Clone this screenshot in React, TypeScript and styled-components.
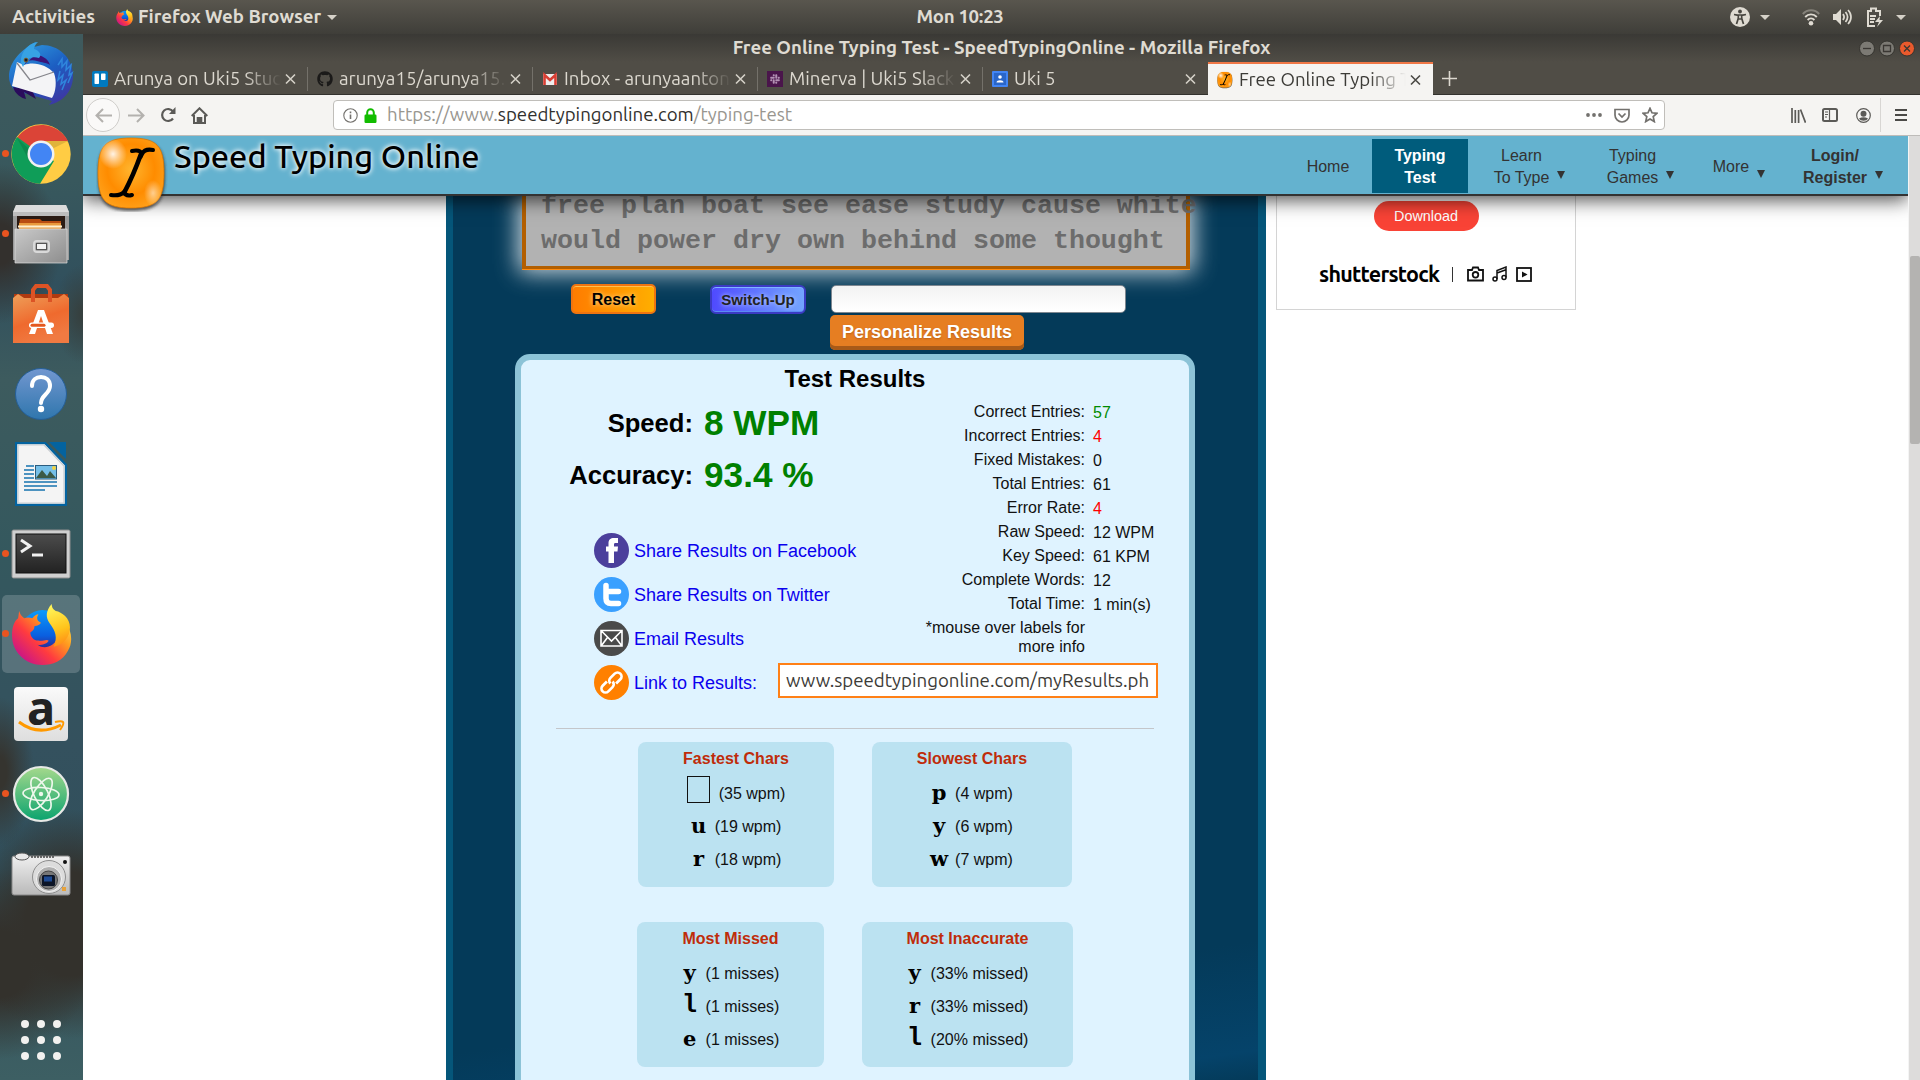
import React from 'react';
import styled, { createGlobalStyle } from 'styled-components';
import { FaGithub, FaSlack } from 'react-icons/fa';

const ui = '"Ubuntu", "Noto Sans", "Open Sans", sans-serif';
const arial = '"Liberation Sans", Arial, sans-serif';

const Global = createGlobalStyle`
  * { box-sizing: border-box; }
  body { margin: 0; background: #fff; overflow: hidden; font-family: ${arial}; }
  svg { display: block; flex: none; }
`;

const Desktop = styled.div`
  width: 1920px; height: 1080px; display: flex; flex-direction: column; overflow: hidden;
`;
const TopBar = styled.div`
  height: 34px; flex: none; display: grid; grid-template-columns: 1fr auto 1fr; align-items: center;
  background: linear-gradient(#59564e, #3f3e39); color: #dfdbd2;
  font: bold 18.67px/34px ${ui};
`;
const TopLeft = styled.div`display: flex; align-items: center; padding-left: 12px;`;
const TopRight = styled.div`display: flex; align-items: center; justify-content: flex-end; padding-right: 14px;`;
const Label = styled.span<{ $ls?: number; $ml?: number }>`
  letter-spacing: ${p => p.$ls ?? 0}px; margin-left: ${p => p.$ml ?? 0}px; white-space: nowrap;
`;
const Caret = styled.i<{ $ml?: number }>`
  width: 0; height: 0; border: 5px solid transparent; border-top-color: #d5d1c8; border-bottom: 0; margin-left: ${p => p.$ml ?? 7}px;
`;
const Below = styled.div`flex: 1; display: flex; min-height: 0;`;

const Dock = styled.div`
  width: 83px; flex: none; display: flex; flex-direction: column; justify-content: space-between;
  background:
    radial-gradient(ellipse 62px 80px at 0 210px, #33302d 25%, transparent 100%),
    radial-gradient(ellipse 30px 50px at 83px 280px, #36403f 10%, transparent 100%),
    radial-gradient(ellipse 34px 75px at 0 738px, #35342f 20%, transparent 100%),
    radial-gradient(ellipse 100px 115px at 70px 890px, #33312c 45%, transparent 100%),
    radial-gradient(ellipse 90px 95px at 0 930px, #33312c 35%, transparent 100%),
    linear-gradient(#3f5a5d 0%, #38585d 14%, #31505d 24%, #3d5b5e 33%, #34585e 50%, #34515e 68%, #31505c 80%, #3d5f63 100%);
`;
const DockList = styled.div`display: flex; flex-direction: column; gap: 2px; padding: 1px 2px;`;
const DockItem = styled.div<{ $active?: boolean }>`
  height: 78px; width: 78px; border-radius: 5px; position: relative;
  display: flex; align-items: center; justify-content: center;
  background: ${p => (p.$active ? 'rgba(255,255,255,.18)' : 'none')};
`;
const RunDot = styled.i`
  position: absolute; left: 0; top: 35px; width: 7px; height: 7px; border-radius: 50%; background: #e95420;
`;
const AppsGrid = styled.div`
  display: grid; grid-template-columns: repeat(3, 8px); gap: 8px; margin: 0 0 20px 21px;
`;
const AppDot = styled.i`width: 8px; height: 8px; border-radius: 50%; background: #f2f1ef;`;

const Win = styled.div`flex: 1; display: flex; flex-direction: column; min-width: 0;`;
const TitleBar = styled.div`
  height: 28px; flex: none; display: grid; grid-template-columns: 1fr auto 1fr; align-items: center;
  background: linear-gradient(#3a3935, #504d46); color: #dfdbd2; font: bold 18.67px/28px ${ui};
`;
const WinButtons = styled.div`display: flex; justify-content: flex-end; gap: 4px; padding-right: 5px;`;
const Tabs = styled.div`
  height: 33px; flex: none; display: flex; background: #504d46; border-bottom: 1px solid #33322e;
`;
const Tab = styled.div<{ $active?: boolean; $sep?: boolean }>`
  width: 225px; height: ${p => (p.$active ? 33 : 32)}px; display: flex; align-items: center; padding: 2px 12px 0 9px; position: relative;
  color: ${p => (p.$active ? '#3c3b37' : '#dcd8cf')};
  background: ${p => (p.$active ? '#f5f4f2' : 'none')};
  box-shadow: ${p => (p.$active ? 'inset 0 2px #f07746' : 'none')};
  &::after { content: ''; display: ${p => (p.$sep ? 'block' : 'none')}; width: 1px; height: 24px; background: #74716a; position: absolute; right: 0; top: 5px; }
`;
const TabTitle = styled.div`
  flex: 1; margin: 0 4px 0 6px; overflow: hidden; white-space: nowrap; font: 18.67px/26px ${ui};
  mask-image: linear-gradient(90deg, #000 78%, transparent 100%);
`;
const NewTab = styled.div`display: flex; align-items: center; padding-left: 9px;`;

const Toolbar = styled.div`
  height: 41px; flex: none; display: flex; align-items: center; background: #f5f4f2; border-bottom: 1px solid #bebcb9; color: #5b5a57;
`;
const NavIcons = styled.div`width: 250px; display: flex; align-items: center;`;
const BackBtn = styled.div`
  width: 34px; height: 34px; margin: 0 8px 0 3px; border-radius: 50%; border: 1px solid #cfcdca; background: #faf9f8; display: flex; align-items: center; justify-content: center;
`;
const IconSlot = styled.div<{ $w: number }>`width: ${p => p.$w}px; display: flex; align-items: center; justify-content: center;`;
const UrlBar = styled.div`
  width: 1332px; height: 30px; display: flex; align-items: center; border: 1px solid #c0beba; border-radius: 4px; background: #fff; padding: 0 0 0 9px;
`;
const Url = styled.div`
  flex: 1; margin-left: 10px; font: 18.67px/28px ${ui}; color: #98968f; white-space: nowrap;
  b { font-weight: 400; color: #32312e; }
`;
const ToolRight = styled.div`flex: 1; display: flex; align-items: center; justify-content: flex-end;`;
const VLine = styled.i`width: 1px; height: 34px; background: #d8d6d3;`;

const PageRow = styled.div`flex: 1; display: flex; min-height: 0;`;
const View = styled.div`width: 1825px; display: flex; flex-direction: column; min-height: 0; overflow: hidden; background: #fff;`;
const Scrollbar = styled.div`flex: 1; background: #dddcdb; border-left: 1px solid #f4f4f4; padding-top: 120px;`;
const Thumb = styled.div`height: 188px; background: #b4b3b1; border-radius: 2px; margin-left: 1px;`;

const Header = styled.header`
  height: 60px; flex: none; position: relative; z-index: 5; display: flex; background: #64b2cf; border-bottom: 2px solid #333;
  box-shadow: 0 4px 18px 0 rgba(0,0,0,.7);
`;
const Logo = styled.div`position: absolute; left: 13px; top: 0;`;
const Brand = styled.div`
  margin-left: 91px; width: 1110px; font: 500 32.5px/40px ${ui}; color: #000;
  text-shadow: 0 0 4px #fff, 0 0 6px rgba(255,255,255,.8);
`;
const NavItem = styled.div<{ $w: number; $on?: boolean; $bold?: boolean }>`
  width: ${p => p.$w}px; height: 54px; margin-top: 3px; padding-top: 1px; display: flex; align-items: center; justify-content: center;
  text-align: center; font: ${p => (p.$bold ? 'bold' : 'normal')} 16px/22px ${arial};
  color: ${p => (p.$on ? '#fff' : '#333')}; background: ${p => (p.$on ? '#005c7c' : 'none')};
`;
const NavArrow = styled.i<{ $top?: number }>`
  border: 4px solid transparent; border-top: 8px solid #333; border-bottom: 0; margin: ${p => p.$top ?? 17}px 0 0 8px;
`;

const Body = styled.div`flex: 1; display: flex; padding-left: 363px; min-height: 0; align-items: flex-start;`;
const Main = styled.main`
  width: 820px; height: 884px; flex: none; overflow: hidden; border: solid #05567a; border-width: 0 8px 0 7px;
  background: linear-gradient(172deg, #043a59 86%, #05436a 97%, #043a59 100%);
`;
const TextBox = styled.div`
  display: flex; margin-left: 69px; width: 668px; height: 73px; padding: 0 0 0 15px; background: #b2b2b2;
  border: solid #b35f00; border-width: 0 4px 3px 4px; box-shadow: 0 1px #ff8c12, 0 0 22px 3px rgba(255,255,255,.85);
  font: bold 26.67px/35px "Liberation Mono", "Courier New", monospace; color: #6c6c6c; white-space: pre;
`;
const TextLines = styled.div`margin-top: -7px;`;
const Controls = styled.div`height: 85px; padding: 15px 0 0 118px; display: flex; align-items: flex-start;`;
const ResetBtn = styled.div`
  width: 85px; height: 30px; border-radius: 5px; border: 2px solid #ee7411; background: linear-gradient(90deg, #ff7c00, #ffae00);
  box-shadow: inset 0 1px #ffbf50; text-align: center; font: bold 16px/27px ${arial}; color: #000; text-shadow: 0 0 5px #ffe0a0;
`;
const SwitchBtn = styled.div`
  width: 96px; height: 29px; margin: 1px 24px 0 54px; border-radius: 6px; border: 2px solid #3b3ac4; background: linear-gradient(90deg, #4f4aff, #73a4ff);
  box-shadow: inset 0 1px #7db5ff, inset 0 -1px #5a8cf0; text-align: center; font: bold 15px/25px ${arial}; color: #222; text-shadow: 0 0 5px #c8dcff;
`;
const ControlCol = styled.div`display: flex; flex-direction: column;`;
const TextInput = styled.div`
  width: 295px; height: 28px; margin: 1px 0 2px 1px; border: 1.5px solid #7e8790; border-radius: 5px; background: linear-gradient(#f2f2f2, #fff);
`;
const PersonalizeBtn = styled.div`
  width: 194px; height: 35px; border-radius: 5px; background: #e67e22; box-shadow: inset 0 -4px #a85a18;
  text-align: center; font: bold 18px/34px ${arial}; color: #fff; text-shadow: 0 1px 2px #b8611a;
`;
const Panel = styled.section`
  margin-left: 62px; width: 680px; height: 760px; border: 6px solid #8cc3d7; border-radius: 15px; background: #dff3ff;
`;
const PanelTitle = styled.h1`margin: 0; padding-top: 3px; text-align: center; font: bold 24px/32px ${arial}; height: 40px;`;
const Summary = styled.div`display: flex; height: 328px;`;
const ScoreCol = styled.div`width: 383px;`;
const Score = styled.div`height: 52px; display: flex; align-items: flex-start; padding-left: 20px;`;
const ScoreLabel = styled.div`width: 152px; margin-top: -1px; text-align: right; font: bold 25.6px/48px ${arial};`;
const ScoreValue = styled.div`margin: -1px 0 0 11px; font: bold 35.2px/48px ${arial}; color: #008000; white-space: nowrap;`;
const Links = styled.div`margin: 29px 0 0 73px; width: 600px;`;
const LinkRow = styled.div`height: 44px; display: flex; align-items: flex-start; font: 18px/35px ${arial}; color: #0a00ee;`;
const LinkText = styled.span`margin-left: 5px; padding-top: 1px; white-space: nowrap;`;
const LinkField = styled.div`
  width: 380px; height: 35px; margin: -2px 0 0 21px; border: 2px solid #ff8016; background: #fff; padding-left: 6px;
  font: 18.67px/31px ${ui}; color: #3c3b37; white-space: nowrap; overflow: hidden;
`;
const Stats = styled.div`width: 285px; flex: none;`;
const StatRow = styled.div`height: 24px; display: flex; font: 16px/23px ${arial};`;
const StatLabel = styled.div`width: 181px; text-align: right; color: #111;`;
const StatValue = styled.div<{ $c?: string }>`margin: 1px 0 0 8px; color: ${p => p.$c ?? '#111'}; white-space: nowrap;`;
const Note = styled.div`width: 181px; text-align: right; font: 16px/19px ${arial}; color: #111; padding-top: 2px;`;
const Rule = styled.div`height: 1px; background: #c4c6ca; margin: 0 35px 13px;`;
const CardRow = styled.div<{ $left: number; $gap: number }>`
  display: flex; gap: ${p => p.$gap}px; margin: 0 0 35px ${p => p.$left}px;
`;
const Card = styled.div<{ $w: number }>`
  width: ${p => p.$w}px; height: 145px; border-radius: 8px; background: #bbe2f1; padding-top: 6px;
`;
const CardTitle = styled.h2`margin: 0 0 7px; font: bold 16px/21px ${arial}; text-align: center; color: #bf2c0a;`;
const CharRow = styled.div`height: 33px; display: flex; align-items: flex-start; justify-content: center; font: 16px/33px ${arial}; color: #111;`;
const Char = styled.b<{ $mono?: boolean }>`
  width: 16px; margin-right: 8px; display: flex; justify-content: center; color: #000;
  font: bold ${p => (p.$mono ? '25px/33px "Liberation Mono", monospace' : '21px/33px "DejaVu Serif", serif')};
`;
const CharNote = styled.span`margin-top: 1px;`;
const SpaceBox = styled.i`width: 23px; height: 27px; border: 1px solid #111; margin-right: 9px;`;

const Ad = styled.aside`
  margin-left: 10px; width: 300px; height: 114px; border: 1px solid #d4d4d4; border-top: 0; display: flex; flex-direction: column; align-items: center;
`;
const Download = styled.div`
  width: 105px; height: 30px; margin-top: 5px; border-radius: 15px; background: #f94336; color: #fff; text-align: center; font: 14.4px/30px ${arial};
`;
const AdBrand = styled.div`width: 214px; margin-top: 29px; display: flex; align-items: center; height: 28px;`;
const AdName = styled.span`font: bold 21.5px/28px ${ui}; letter-spacing: -.75px; color: #000; width: 120px; white-space: nowrap;`;
const AdBar = styled.i`width: 1px; height: 15px; background: #333; margin: 0 14px 0 13px;`;

const CloseX = ({ c }: { c: string }) => (
  <svg width="11" height="12" viewBox="0 0 11 12" stroke={c} strokeWidth="1.6"><path d="M1 1.5l9 9M10 1.5l-9 9" /></svg>
);

const LogoMark = ({ w, h, k }: { w: number; h: number; k: string }) => (
  <svg width={w} height={h} viewBox="0 0 72 76">
    <defs>
      <radialGradient id={'lg' + k} cx=".5" cy=".45" r=".6">
        <stop offset="0" stopColor="#ffb52e" /><stop offset=".6" stopColor="#ff8c00" /><stop offset="1" stopColor="#ffa21c" />
      </radialGradient>
      <radialGradient id={'lh' + k}><stop offset="0" stopColor="#fff" stopOpacity=".9" /><stop offset="1" stopColor="#fff" stopOpacity="0" /></radialGradient>
      <filter id={'lb' + k}><feGaussianBlur stdDeviation="1.5" /></filter>
    </defs>
    <path d="M35 4C62 4 69 12 69 39S62 75 35 75 2 66 2 39 9 4 35 4z" fill="#222" opacity=".7" filter={`url(#lb${k})`} />
    <path d="M35 2C61 2 68 10 68 37S61 72 35 72 2 64 2 37 9 2 35 2z" fill={`url(#lg${k})`} stroke="#e07800" strokeWidth=".8" />
    <ellipse cx="17" cy="18" rx="14" ry="15" fill={`url(#lh${k})`} />
    <ellipse cx="57" cy="57" rx="9" ry="13" fill={`url(#lh${k})`} opacity=".6" />
    <g fill="none" stroke="#000" strokeLinecap="round">
      <path d="M36 15c5-1 9 0 10 3 2-4 6-5 11-4" strokeWidth="4" />
      <path d="M45 18C40 32 36 42 28 57" strokeWidth="4.600" />
      <path d="M15 59c6 1 10 0 13-3 1 3 4 4 8 3" strokeWidth="4" />
    </g>
  </svg>
);

const FirefoxIcon = ({ s, k }: { s: number; k: string }) => (
  <svg width={s} height={s} viewBox="0 0 60 60">
    <defs>
      <linearGradient id={'fa' + k} x1="1" y1=".1" x2=".15" y2=".9"><stop offset="0" stopColor="#fff44f" /><stop offset=".35" stopColor="#ff9a1f" /><stop offset=".65" stopColor="#ff3b3f" /><stop offset="1" stopColor="#c8148a" /></linearGradient>
      <linearGradient id={'fb' + k} x1=".5" y1="0" x2=".5" y2="1"><stop offset="0" stopColor="#0a9bfb" /><stop offset=".6" stopColor="#0a5fe0" /><stop offset="1" stopColor="#3b1778" /></linearGradient>
      <linearGradient id={'fc' + k} x1=".4" y1="0" x2=".6" y2="1"><stop offset="0" stopColor="#fff65a" /><stop offset=".6" stopColor="#ffc41c" /><stop offset="1" stopColor="#ff8a16" /></linearGradient>
    </defs>
    <circle cx="31" cy="27" r="21" fill={`url(#fb${k})`} />
    <path d="M8 7c1 3 2 5 5 7 3-1 5-1 8 0 2-3 4-4 6-4-2 3-2 6 2 8 1 2-3 3-6 4 0 3-1 4-4 6 0 4 3 8 8 8 4 1 8-2 10 0-1 3-6 5-11 4 6 5 17 2 19-6 3-9-3-13-1-23 7 4 9 5 10 8 6 8 7 19 2 27C51 56 41 60 31 60 14 60 1 47 1 31 1 23 3 17 7 14z" fill={`url(#fa${k})`} />
    <path d="M40 0c-6 7-6 13-2 19 6 8 8 14 4 23 10-2 16-10 16-19C58 14 50 8 44 7c-3-2-4-4-4-7z" fill={`url(#fc${k})`} />
  </svg>
);

const Thunderbird = () => (
  <svg width="66" height="66" viewBox="0 0 66 66">
    <defs><linearGradient id="tb" x1=".2" y1="0" x2=".8" y2="1"><stop offset="0" stopColor="#2f9be0" /><stop offset=".5" stopColor="#1c5ec2" /><stop offset="1" stopColor="#4034a0" /></linearGradient></defs>
    <path d="M28 1C14 8 1 20 1 36c0 8 6 15 12 18l3-2 28 8-3 4c14-3 24-14 24-29C65 16 50 4 34 4l-8 2z" fill="url(#tb)" />
    <path d="M5 46c2 7 8 11 13 12l-2-7 12 7-4-9z" fill="#2a0c5c" />
    <path d="M9 21L4 45l40 12c4-6 5-17 2-25-7-8-20-12-30-8z" fill="#f4f4f6" />
    <path d="M9 22l13 17 24-8" fill="none" stroke="#86868c" strokeWidth="1.3" />
    <path d="M16 24c2-4 7-6 13-4 5 2 9 1 13 4-2-7-9-10-15-10z" fill="#3a1478" />
    <path d="M13 22C12 12 20 2 30 1c-3 3-4 5-4 7 6 2 8 6 5 9-6-2-12 0-14 5l-2 4z" fill="#37a2e4" />
    <path d="M50 24l4-6v8l5-6-1 9 5-5-2 10 3-2-4 10M52 30l-2 9 5-5-2 9 5-4-4 10" fill="none" stroke="#2f86dc" strokeWidth="1.500" />
    <circle cx="18" cy="19" r="2" fill="#1b1b2a" stroke="#97712b" strokeWidth=".8" />
  </svg>
);
const Chrome = () => (
  <svg width="60" height="60" viewBox="0 0 60 60">
    <circle cx="30" cy="30" r="29.7" fill="#fc4" />
    <path d="M30 30L6 14A29.7 29.7 0 0 1 57 17H30z" fill="#db4437" />
    <path d="M30 30L6 13A29.7 29.7 0 0 0 29 59.7L43 37z" fill="#0f9d58" />
    <path d="M30 17h27l-14 7zM6 14l13 24-2-14z" fill="#000" opacity=".12" />
    <circle cx="30" cy="30" r="13.5" fill="#f1f1f1" /><circle cx="30" cy="30" r="11" fill="#4285f4" />
  </svg>
);
const Files = () => (
  <svg width="58" height="60" viewBox="0 0 58 60">
    <defs><linearGradient id="fi" x1="0" y1="0" x2="1" y2="1"><stop offset="0" stopColor="#c9c9c9" /><stop offset="1" stopColor="#8d8d8d" /></linearGradient></defs>
    <path d="M4 1h50l3 7v48H1V8z" fill="#9b9b9b" /><path d="M4 1h50l3 7H1z" fill="#dcdcdc" /><path d="M1 8h56v4H1z" fill="#bdbdbd" />
    <path d="M5 12h48v18H5z" fill="#2a1b14" /><path d="M8 15h20l2 2h19v4H7z" fill="#b94d12" /><path d="M7 19h42v8H7z" fill="#e99a3e" /><path d="M6 21.5h44v2H6z" fill="#fff0cf" />
    <path d="M3 25h52v34H3z" fill="url(#fi)" stroke="#e0e0e0" strokeWidth=".7" />
    <rect x="22" y="37" width="15" height="11" rx="3" fill="none" stroke="#d9d9d9" strokeWidth="2" /><rect x="24.5" y="39.5" width="10" height="6" fill="#f3f3f3" stroke="#555" />
  </svg>
);
const Software = () => (
  <svg width="58" height="60" viewBox="0 0 58 60">
    <defs><linearGradient id="so" x1="0" y1="0" x2=".4" y2="1"><stop offset="0" stopColor="#eea05a" /><stop offset=".6" stopColor="#ef6a2e" /><stop offset="1" stopColor="#f07a42" /></linearGradient></defs>
    <path d="M2 10h54v6H2z" fill="#b03a10" /><path d="M1 14l5-4 6 4h34l6-4 5 4v45H1z" fill="url(#so)" />
    <path d="M21 18V6l3-4h11l3 4v12" fill="none" stroke="#dd5325" strokeWidth="4" />
    <path d="M17 50l9-24h6l9 24h-6l-6-18-6 18z" fill="#fff" /><rect x="17" y="38.5" width="25" height="5.5" rx="2.7" fill="#fff" /><rect x="18.5" y="39.8" width="15" height="3" rx="1.5" fill="#e4581f" />
  </svg>
);
const Help = () => (
  <svg width="54" height="54" viewBox="0 0 54 54">
    <defs><linearGradient id="he" x1="0" y1="0" x2="0" y2="1"><stop offset="0" stopColor="#7297d0" /><stop offset="1" stopColor="#2f76ad" /></linearGradient></defs>
    <circle cx="27" cy="27" r="25.5" fill="url(#he)" stroke="#255f98" />
    <path d="M18 19c0-6 4-9 9-9s9 3 9 9c0 8-9 9-9 17" fill="none" stroke="#fff" strokeWidth="4" strokeLinecap="round" /><circle cx="27" cy="42" r="3.2" fill="#fff" />
  </svg>
);
const Writer = () => (
  <svg width="52" height="64" viewBox="0 0 52 64">
    <path d="M1 1h29l21 22v40H1z" fill="#f4f4f4" stroke="#04639f" strokeWidth="2.4" /><path d="M3 3h26l20 21v37H3z" fill="none" stroke="#c8ccd0" strokeWidth="1.2" />
    <path d="M34 0h17v17z" fill="#04639f" />
    <path d="M11 24h8M9 28h10M9 32h10M9 36h10M9 40h33M9 44h33M9 48h21" stroke="#1673ae" strokeWidth="1.7" />
    <rect x="20.5" y="23.5" width="21" height="13.5" fill="#75bfe8" stroke="#2b5c7e" /><path d="M21 36l6-8 5 6 3-5 6 7z" fill="#3c5a46" /><circle cx="39" cy="26" r="2" fill="#f2d33f" />
  </svg>
);
const Term = () => (
  <svg width="60" height="50" viewBox="0 0 60 50">
    <defs><linearGradient id="te" x1="0" y1="0" x2="0" y2="1"><stop offset="0" stopColor="#4c4c4c" /><stop offset="1" stopColor="#222" /></linearGradient></defs>
    <rect x="1" y="1" width="58" height="48" rx="1.5" fill="#d0d0d0" stroke="#8e8e8e" /><rect x="5" y="5" width="50" height="39" fill="url(#te)" stroke="#111" />
    <path d="M10 11l9 6-9 6" fill="none" stroke="#f1f1f1" strokeWidth="3" /><path d="M21 26h11" stroke="#f1f1f1" strokeWidth="3" />
  </svg>
);
const AmazonTile = styled.div`
  width: 54px; height: 54px; border-radius: 4px; background: linear-gradient(#fafafa, #dedede); display: flex; align-items: center; justify-content: center; position: relative; color: #222;
`;
const AmazonLetter = styled.span`font: bold 47px/44px "Noto Sans", sans-serif; margin-top: -15px;`;
const Smile = styled.svg`position: absolute; left: 4px; top: 33px;`;
const Atom = () => (
  <svg width="58" height="58" viewBox="0 0 58 58">
    <defs><linearGradient id="at" x1="0" y1="0" x2="0" y2="1"><stop offset="0" stopColor="#a5d98c" /><stop offset="1" stopColor="#0aa36e" /></linearGradient></defs>
    <circle cx="29" cy="29" r="27" fill="url(#at)" stroke="#e7e9e6" strokeWidth="2.2" />
    <g fill="none" stroke="#eef7ec" strokeWidth="1.7"><ellipse cx="29" cy="29" rx="18" ry="6.5" transform="rotate(3 29 29)" /><ellipse cx="29" cy="29" rx="18" ry="7" transform="rotate(64 29 29)" /><ellipse cx="29" cy="29" rx="18" ry="7" transform="rotate(122 29 29)" /></g>
    <circle cx="29" cy="29" r="2.2" fill="#eef7ec" />
  </svg>
);
const CameraIcon = () => (
  <svg width="60" height="44" viewBox="0 0 60 44">
    <defs><linearGradient id="ca" x1="0" y1="0" x2="0" y2="1"><stop offset="0" stopColor="#efefef" /><stop offset="1" stopColor="#b9b9b9" /></linearGradient></defs>
    <rect x="1" y="4" width="58" height="39" rx="2" fill="url(#ca)" stroke="#888" /><ellipse cx="11" cy="4.5" rx="7" ry="3.5" fill="#e8e8e8" stroke="#555" />
    <path d="M20 5h23" stroke="#444" strokeWidth="1.5" strokeDasharray="2 1" />
    <circle cx="38" cy="25" r="16.5" fill="#dcdcdc" stroke="#8e8e8e" /><circle cx="38" cy="27" r="12.5" fill="#b0b0b0" stroke="#f4f4f4" /><circle cx="37.5" cy="28" r="9" fill="#777" stroke="#444" /><rect x="31" y="23" width="13" height="11" rx="1.5" fill="#0b1426" /><rect x="33" y="24.5" width="8" height="5" fill="#1e4a93" />
    <circle cx="54" cy="10" r="2" fill="#111" /><rect x="51" y="35" width="4" height="4" fill="#e7a23a" />
  </svg>
);

const Round = ({ fill, children }: { fill: string; children: React.ReactNode }) => (
  <svg width="35" height="35" viewBox="0 0 35 35"><circle cx="17.5" cy="17.5" r="17.5" fill={fill} />{children}</svg>
);

const WinBtn = ({ fill, d }: { fill: string; d: string }) => (
  <svg width="16" height="17" viewBox="0 0 16 17"><circle cx="8" cy="8.5" r="7.5" fill={fill} stroke="#35342f" /><path d={d} fill="none" stroke="#3a3733" strokeWidth="1.3" /></svg>
);

const WifiIcon = styled.svg`margin-left: 32px;`;
const SoundIcon = styled.svg`margin-left: 12px;`;
const BatteryIcon = styled.svg`margin-left: 14px;`;
const LockIcon = styled.svg`margin-left: 6px;`;
const NoteIcon = styled.svg`margin-left: 8px;`;
const PlayIcon = styled.svg`margin-left: 9px;`;

const dock: { el: React.ReactNode; run?: boolean; active?: boolean }[] = [
  { el: <Thunderbird /> }, { el: <Chrome />, run: true }, { el: <Files />, run: true }, { el: <Software /> }, { el: <Help /> },
  { el: <Writer /> }, { el: <Term />, run: true }, { el: <FirefoxIcon s={61} k="d" />, run: true, active: true },
  { el: <AmazonTile><AmazonLetter>a</AmazonLetter><Smile width="47" height="15" viewBox="0 0 47 15"><path d="M1 2c13 10 28 10 42 3" fill="none" stroke="#f90" strokeWidth="3" /><path d="M37 2c4-1 7-1 8 0s-1 5-3 8" fill="none" stroke="#f90" strokeWidth="2" /></Smile></AmazonTile> },
  { el: <Atom />, run: true }, { el: <CameraIcon /> },
];

const stats: [string, string, string?][] = [
  ['Correct Entries:', '57', '#008b00'], ['Incorrect Entries:', '4', '#f00'], ['Fixed Mistakes:', '0'], ['Total Entries:', '61'],
  ['Error Rate:', '4', '#f00'], ['Raw Speed:', '12 WPM'], ['Key Speed:', '61 KPM'], ['Complete Words:', '12'], ['Total Time:', '1 min(s)'],
];

const cards: { left: number; gap: number; items: { w: number; title: string; rows: [string, string][] }[] }[] = [
  { left: 117, gap: 38, items: [
    { w: 196, title: 'Fastest Chars', rows: [['', '(35 wpm)'], ['u', '(19 wpm)'], ['r', '(18 wpm)']] },
    { w: 200, title: 'Slowest Chars', rows: [['p', '(4 wpm)'], ['y', '(6 wpm)'], ['w', '(7 wpm)']] },
  ] },
  { left: 116, gap: 38, items: [
    { w: 187, title: 'Most Missed', rows: [['y', '(1 misses)'], ['l', '(1 misses)'], ['e', '(1 misses)']] },
    { w: 211, title: 'Most Inaccurate', rows: [['y', '(33% missed)'], ['r', '(33% missed)'], ['l', '(20% missed)']] },
  ] },
];

const tabs: { icon: React.ReactNode; title: string }[] = [
  { title: 'Arunya on Uki5 Stud', icon: <svg width="16" height="16" viewBox="0 0 16 16"><rect width="16" height="16" rx="2" fill="#0079bf" /><rect x="2.5" y="2.5" width="4.5" height="10.5" rx=".8" fill="#fff" /><rect x="9" y="2.5" width="4.5" height="6.5" rx=".8" fill="#fff" /></svg> },
  { title: 'arunya15/arunya15.', icon: <FaGithub size={16} color="#1b1a19" /> },
  { title: 'Inbox - arunyaanton', icon: <svg width="16" height="16" viewBox="0 0 16 16"><rect x="1" y="3" width="14" height="11" fill="#eee" /><path d="M2.5 14V4L8 9l5.500-5v10" fill="none" stroke="#d93f34" strokeWidth="2.6" /></svg> },
  { title: 'Minerva | Uki5 Slack', icon: <svg width="16" height="16" viewBox="0 0 16 16"><rect width="16" height="16" fill="#4a154b" /><g transform="translate(2.5 2.5)" color="#b391b4"><FaSlack size={11} /></g></svg> },
  { title: 'Uki 5', icon: <svg width="16" height="16" viewBox="0 0 16 16"><rect width="16" height="16" rx="1" fill="#4285f4" /><rect x="2" y="2" width="12" height="12" fill="#2a66c8" /><circle cx="8" cy="6" r="1.8" fill="#fff" /><path d="M4.500 11.500c0-3 7-3 7 0z" fill="#fff" /></svg> },
];

export default function App() {
  return (
    <Desktop>
      <Global />
      <TopBar>
        <TopLeft>
          <Label>Activities</Label>
          <Label $ml={21}><FirefoxIcon s={17} k="t" /></Label>
          <Label $ml={5}>Firefox Web Browser</Label>
          <Caret $ml={6} />
        </TopLeft>
        <Label $ls={-0.3}>Mon 10:23</Label>
        <TopRight>
          <svg width="20" height="20" viewBox="0 0 20 20"><circle cx="10" cy="10" r="10" fill="#dfdbd2" /><circle cx="10" cy="4.5" r="1.9" fill="#484640" /><path d="M4 7.500l4.300.8v3L6.500 17M16 7.500l-4.300.8v3l1.800 5.700M8.300 8h3.400v4H8.300z" fill="none" stroke="#484640" strokeWidth="1.7" /></svg>
          <Caret $ml={10} />
          <WifiIcon width="18" height="18" viewBox="0 0 18 18" fill="none" strokeWidth="1.9"><path d="M.8 6c4.500-5 12-5 16.400 0" stroke="#85827a" /><path d="M3.200 9c3.300-3.500 8.300-3.500 11.600 0M5.600 12c2-2 4.800-2 6.800 0" stroke="#dfdbd2" /><circle cx="9" cy="15.2" r="2.3" fill="#dfdbd2" /></WifiIcon>
          <SoundIcon width="20" height="18" viewBox="0 0 20 18" fill="none" stroke="#dfdbd2" strokeWidth="1.7"><path d="M1 6h3l5-5v16l-5-5H1z" fill="#dfdbd2" stroke="none" /><path d="M11 6c1.500 2 1.500 4 0 6M13.500 4c2.500 3 2.500 7 0 10M16 2c4 4 4 10 0 14" /></SoundIcon>
          <BatteryIcon width="18" height="20" viewBox="0 0 18 20" fill="none" stroke="#dfdbd2" strokeWidth="2"><path d="M9 19H2V4h3V1.500h5V4h4v5M4 9h6M4 12h5M4 15h4" /><path d="M14 9l-5 6h4l-2 5 6-7h-3.500z" fill="#dfdbd2" stroke="none" /></BatteryIcon>
          <Caret $ml={12} />
        </TopRight>
      </TopBar>
      <Below>
        <Dock>
          <DockList>{dock.map((d, i) => <DockItem key={i} $active={d.active}>{d.el}{d.run && <RunDot />}</DockItem>)}</DockList>
          <AppsGrid>{Array.from({ length: 9 }, (_, i) => <AppDot key={i} />)}</AppsGrid>
        </Dock>
        <Win>
          <TitleBar>
            <span />
            <Label>Free Online Typing Test - SpeedTypingOnline - Mozilla Firefox</Label>
            <WinButtons>
              <WinBtn fill="#7c7a74" d="M4 8.500h8" /><WinBtn fill="#7c7a74" d="M4.500 5.500h7v6h-7z" /><WinBtn fill="#e95a2d" d="M5 5.500l6 6M11 5.500l-6 6" />
            </WinButtons>
          </TitleBar>
          <Tabs>
            {tabs.map((t, i) => (
              <Tab key={t.title} $sep={i < 4}>{t.icon}<TabTitle>{t.title}</TabTitle><CloseX c="#d4d0c7" /></Tab>
            ))}
            <Tab $active><LogoMark w={16} h={18} k="f" /><TabTitle>Free Online Typing T</TabTitle><CloseX c="#4b4a46" /></Tab>
            <NewTab><svg width="15" height="15" viewBox="0 0 15 15" stroke="#dcd8cf" strokeWidth="1.6"><path d="M7.500 0v15M0 7.500h15" /></svg></NewTab>
          </Tabs>
          <Toolbar>
            <NavIcons>
              <BackBtn><svg width="17" height="15" viewBox="0 0 17 15" fill="none" stroke="#b3b1ae" strokeWidth="2"><path d="M17 7.500H2M8 1L1.500 7.500 8 14" /></svg></BackBtn>
              <svg width="17" height="15" viewBox="0 0 17 15" fill="none" stroke="#b3b1ae" strokeWidth="2"><path d="M0 7.500h15M9 1l6.500 6.500L9 14" /></svg>
              <IconSlot $w={46}><svg width="16" height="16" viewBox="0 0 16 16" fill="none" stroke="#5b5a57" strokeWidth="2.2"><path d="M13 11.500A6 6 0 1 1 13 4.500" /><path d="M15.500 0v7H9z" fill="#5b5a57" stroke="none" /></svg></IconSlot>
              <IconSlot $w={17}><svg width="17" height="17" viewBox="0 0 17 17" fill="none" stroke="#5b5a57" strokeWidth="2"><path d="M.7 9L8.500 1.300 16.300 9M3 8v8h11V8" /><path d="M6.700 16v-5h3.600v5" fill="#5b5a57" /></svg></IconSlot>
            </NavIcons>
            <UrlBar>
              <svg width="15" height="15" viewBox="0 0 15 15" fill="none" stroke="#74726e"><circle cx="7.5" cy="7.5" r="6.7" strokeWidth="1.1" /><path d="M7.500 6.500V11M7.500 3.500v1.700" strokeWidth="1.6" /></svg>
              <LockIcon width="13" height="15" viewBox="0 0 13 15"><rect x=".5" y="6.5" width="12" height="8.5" rx="1.2" fill="#12bc00" /><path d="M3.200 7V4.500a3.300 3.300 0 0 1 6.600 0V7" fill="none" stroke="#12bc00" strokeWidth="2" /></LockIcon>
              <Url>https://www.<b>speedtypingonline.com</b>/typing-test</Url>
              <IconSlot $w={28}><svg width="16" height="4" viewBox="0 0 16 4" fill="#73716e"><circle cx="2" cy="2" r="1.9" /><circle cx="8" cy="2" r="1.9" /><circle cx="14" cy="2" r="1.9" /></svg></IconSlot>
              <IconSlot $w={28}><svg width="16" height="15" viewBox="0 0 16 15" fill="none" stroke="#73716e" strokeWidth="1.7"><path d="M1 1.500h14V7a7 7 0 0 1-14 0zM4.500 5.500L8 9l3.500-3.500" /></svg></IconSlot>
              <IconSlot $w={28}><svg width="16" height="16" viewBox="0 0 16 16" fill="none" stroke="#73716e" strokeWidth="1.7"><path d="M8 1.300l2 4.500 4.900.5-3.700 3.300 1.100 5L8 12l-4.300 2.600 1.100-5L1.100 6.300 6 5.800z" /></svg></IconSlot>
            </UrlBar>
            <ToolRight>
              <IconSlot $w={32}><svg width="15" height="15" viewBox="0 0 15 15" stroke="#5b5a57" strokeWidth="1.7"><path d="M1 0v15M4.300 2v13M7.600 2v13M9.500 1.500l5 13.200" /></svg></IconSlot>
              <IconSlot $w={32}><svg width="16" height="14" viewBox="0 0 16 14" fill="none" stroke="#5b5a57"><rect x="1" y="1" width="14" height="12" rx="1.5" strokeWidth="2" /><path d="M7.500 1v12M3 4h3M3 6.500h3M3 9h2" strokeWidth="1.2" /></svg></IconSlot>
              <IconSlot $w={34}><svg width="15" height="15" viewBox="0 0 15 15"><circle cx="7.5" cy="7.5" r="6.8" fill="none" stroke="#5b5a57" strokeWidth="1.2" /><circle cx="7.5" cy="5.7" r="3" fill="#5b5a57" /><path d="M3 10.500c3-1.800 6-1.800 9 0-1.500 3-7.500 3-9 0z" fill="#5b5a57" /></svg></IconSlot>
              <VLine />
              <IconSlot $w={39}><svg width="12" height="12" viewBox="0 0 12 12" stroke="#4b4a47" strokeWidth="2"><path d="M0 1h12M0 6h12M0 11h12" /></svg></IconSlot>
            </ToolRight>
          </Toolbar>
          <PageRow>
            <View>
              <Header>
                <Logo><LogoMark w={72} h={76} k="h" /></Logo>
                <Brand>Speed Typing Online</Brand>
                <NavItem $w={88}>Home</NavItem>
                <NavItem $w={96} $on $bold>Typing<br />Test</NavItem>
                <NavItem $w={123}>Learn<br />To Type<NavArrow /></NavItem>
                <NavItem $w={99}>Typing<br />Games<NavArrow /></NavItem>
                <NavItem $w={98}>More<NavArrow $top={15} /></NavItem>
                <NavItem $w={110} $bold>Login/<br />Register<NavArrow /></NavItem>
              </Header>
              <Body>
                <Main>
                  <TextBox><TextLines>free plan boat see ease study cause white{'\n'}would power dry own behind some thought</TextLines></TextBox>
                  <Controls>
                    <ResetBtn>Reset</ResetBtn>
                    <SwitchBtn>Switch-Up</SwitchBtn>
                    <ControlCol><TextInput /><PersonalizeBtn>Personalize Results</PersonalizeBtn></ControlCol>
                  </Controls>
                  <Panel>
                    <PanelTitle>Test Results</PanelTitle>
                    <Summary>
                      <ScoreCol>
                        <Score><ScoreLabel>Speed:</ScoreLabel><ScoreValue>8 WPM</ScoreValue></Score>
                        <Score><ScoreLabel>Accuracy:</ScoreLabel><ScoreValue>93.4 %</ScoreValue></Score>
                        <Links>
                          <LinkRow><Round fill="#4b3f9c"><path d="M14.500 30V18.500H12v-5h2.500v-3c0-4 2-5.500 5.500-5.500h4v5h-2.500c-1.200 0-1.500.6-1.500 1.700v1.800h4l-.5 5H20V30z" fill="#fff" /></Round><LinkText>Share Results on Facebook</LinkText></LinkRow>
                          <LinkRow><Round fill="#3aa0ff"><path d="M12 8.500v13c0 3.500 2 5 5 5h7.500M12 14.500h12.500" fill="none" stroke="#fff" strokeWidth="5.5" strokeLinecap="round" /></Round><LinkText>Share Results on Twitter</LinkText></LinkRow>
                          <LinkRow><Round fill="#4a4a4a"><path d="M7 9.500h21v15.500H7zM7.500 10l10 10 10-10M7.500 24.500l6-8M27.500 24.500l-6-8" fill="none" stroke="#fff" strokeWidth="1.6" /></Round><LinkText>Email Results</LinkText></LinkRow>
                          <LinkRow>
                            <Round fill="#ff8000"><g transform="rotate(-45 17.5 17.5)" fill="none" stroke="#fff" strokeWidth="2.7"><path d="M15 13.500H9a4 4 0 0 0 0 8h6a4 4 0 0 0 4-4" /><path d="M20 21.500h6a4 4 0 0 0 0-8h-6a4 4 0 0 0-4 4" /></g></Round>
                            <LinkText>Link to Results:</LinkText>
                            <LinkField>www.speedtypingonline.com/myResults.ph</LinkField>
                          </LinkRow>
                        </Links>
                      </ScoreCol>
                      <Stats>
                        {stats.map(([l, v, c]) => <StatRow key={l}><StatLabel>{l}</StatLabel><StatValue $c={c}>{v}</StatValue></StatRow>)}
                        <Note>*mouse over labels for<br />more info</Note>
                      </Stats>
                    </Summary>
                    <Rule />
                    {cards.map(r => (
                      <CardRow key={r.left} $left={r.left} $gap={r.gap}>
                        {r.items.map(c => (
                          <Card key={c.title} $w={c.w}>
                            <CardTitle>{c.title}</CardTitle>
                            {c.rows.map(([ch, t]) => (
                              <CharRow key={ch + t}>{ch ? <Char $mono={ch === 'l'}>{ch}</Char> : <SpaceBox />}<CharNote>{t}</CharNote></CharRow>
                            ))}
                          </Card>
                        ))}
                      </CardRow>
                    ))}
                  </Panel>
                </Main>
                <Ad>
                  <Download>Download</Download>
                  <AdBrand>
                    <AdName>shutterstock</AdName><AdBar />
                    <svg width="17" height="16" viewBox="0 0 17 16" fill="none" stroke="#111" strokeWidth="1.8"><path d="M1 4h4l1-2.500h5L12 4h4v10.500H1z" /><circle cx="8.5" cy="8.8" r="2.8" /></svg>
                    <NoteIcon width="15" height="16" viewBox="0 0 15 16" fill="none" stroke="#111" strokeWidth="1.5"><path d="M5 13V4.500L14 1v10.500M5 7l9-3.300" /><circle cx="3" cy="13" r="2" /><circle cx="12" cy="11.5" r="2" /></NoteIcon>
                    <PlayIcon width="16" height="15" viewBox="0 0 16 15"><rect x="1" y="1" width="14" height="13" fill="none" stroke="#111" strokeWidth="1.8" /><path d="M6 4.500l5.500 3L6 10.500z" fill="#111" /></PlayIcon>
                  </AdBrand>
                </Ad>
              </Body>
            </View>
            <Scrollbar><Thumb /></Scrollbar>
          </PageRow>
        </Win>
      </Below>
    </Desktop>
  );
}
